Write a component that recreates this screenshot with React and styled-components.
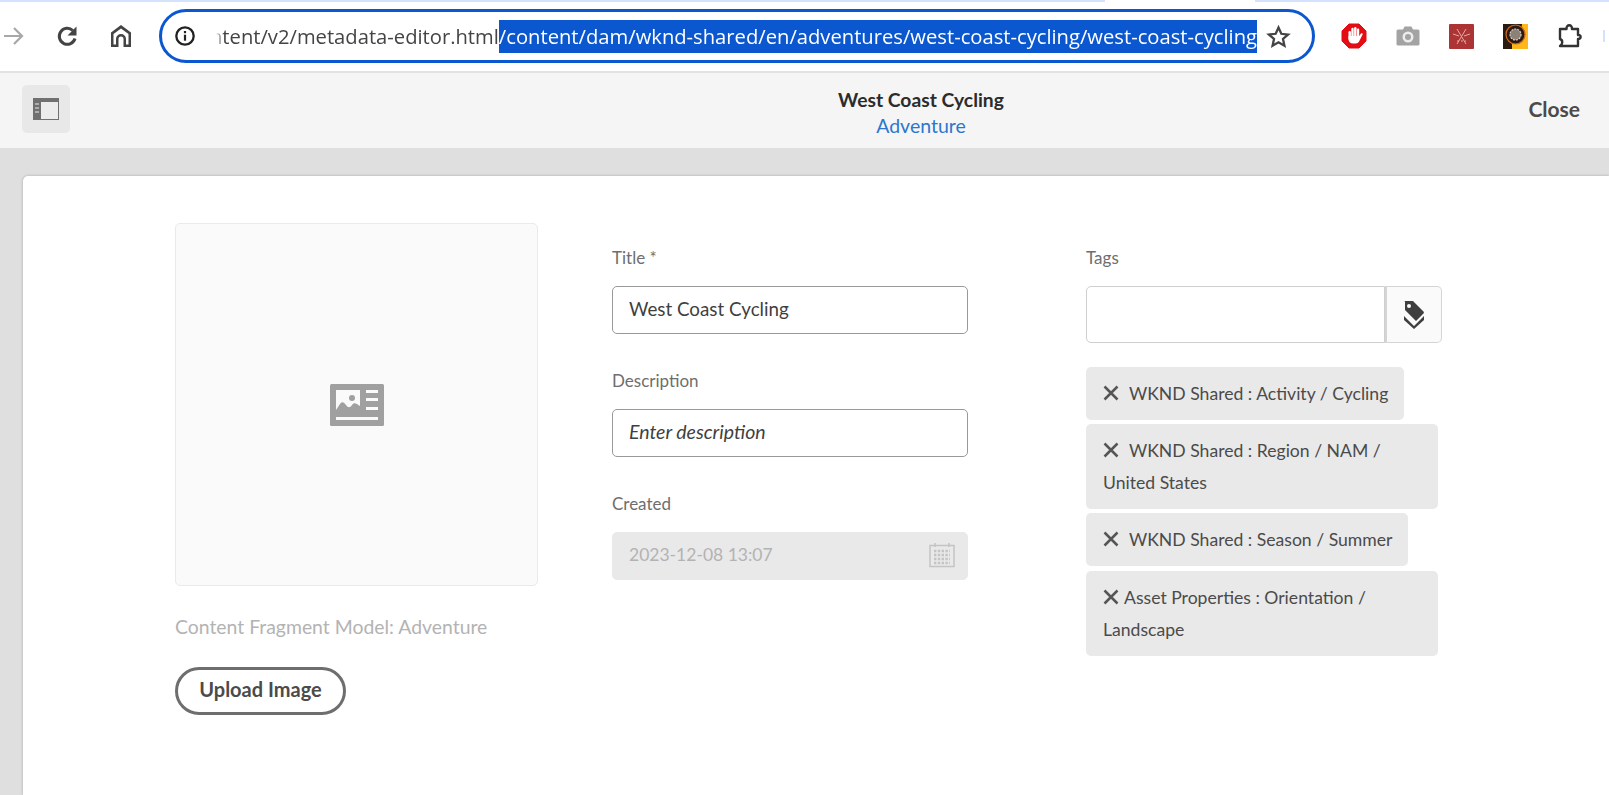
import React from 'react'
import styled, { createGlobalStyle } from 'styled-components'

const GlobalStyle = createGlobalStyle`
  html, body {
    margin: 0;
    padding: 0;
    height: 100%;
    overflow: hidden;
    background: #dfdfdf;
  }
  #root { height: 100%; }
  * { box-sizing: border-box; }
`

const Page = styled.div`
  width: 1609px;
  height: 795px;
  display: flex;
  flex-direction: column;
  overflow: hidden;
  font-family: Lato, "Open Sans", sans-serif;
`

const TabEdge = styled.div`
  height: 2px;
  background: #d3e3fd;
  padding-left: 1105px;
`

const ActiveTabEdge = styled.div`
  width: 150px;
  height: 2px;
  background: #fff;
`

const Toolbar = styled.div`
  height: 71px;
  flex: none;
  display: flex;
  align-items: center;
  background: #fff;
  border-bottom: 2px solid #e2e2e2;
  padding-bottom: 1px;
`

const NavIcon = styled.div`
  width: ${p => p.$w || 54}px;
  flex: none;
  display: flex;
  align-items: center;
  justify-content: ${p => (p.$start ? 'flex-start' : 'center')};
  padding-left: ${p => (p.$start ? '4px' : '0')};
`

const Omnibox = styled.div`
  width: 1156px;
  height: 54px;
  margin-left: 11px;
  flex: none;
  display: flex;
  align-items: center;
  border: 3px solid #0b57d0;
  border-radius: 27px;
  padding: 0 13px 0 12px;
  font-family: "Open Sans", sans-serif;
`

const UrlClip = styled.div`
  flex: 1;
  min-width: 0;
  margin-left: 20px;
  display: flex;
  justify-content: flex-end;
  overflow: hidden;
  white-space: nowrap;
  font-size: 20.2px;
  line-height: 33px;
  color: #444;
  -webkit-mask-image: linear-gradient(90deg, transparent 0, #000 8px);
  mask-image: linear-gradient(90deg, transparent 0, #000 8px);
`

const Selected = styled.span`
  background: #0b57d0;
  color: #fff;
`

const StarSlot = styled.div`
  width: 42px;
  flex: none;
  display: flex;
  justify-content: center;
`

const Extensions = styled.div`
  display: flex;
  align-items: center;
  gap: 29px;
  margin-left: 26px;
`

const WindowEdge = styled.div`
  width: 2px;
  height: 12px;
  margin-left: 20px;
  background: #d3e3fd;
`

const Header = styled.div`
  height: 75px;
  flex: none;
  display: grid;
  grid-template-columns: 799px 200px 1fr;
  align-items: center;
  background: #f5f5f5;
  padding: 0 29px 0 22px;
`

const RailButton = styled.div`
  width: 48px;
  height: 48px;
  margin-bottom: 3px;
  border-radius: 5px;
  background: #e8e8e8;
  display: flex;
  align-items: center;
  justify-content: center;
`

const HeaderTitle = styled.div`
  text-align: center;
  padding-top: 3px;
  font-size: 19.3px;
  line-height: 27px;
  font-weight: 700;
  color: #2c2c2c;
`

const HeaderSub = styled.div`
  font-size: 19.5px;
  line-height: 26px;
  font-weight: 400;
  color: #2d76cf;
`

const CloseLink = styled.div`
  justify-self: end;
  margin-bottom: 5px;
  font-size: 21px;
  font-weight: 700;
  color: #4b4b4b;
`

const Backdrop = styled.div`
  flex: 1;
  padding: 28px 0 0 23px;
  min-height: 0;
`

const Panel = styled.div`
  height: 100%;
  background: #fff;
  border-radius: 5px 0 0 0;
  box-shadow: 0 0 3px rgba(0, 0, 0, 0.25);
  padding: 47px 0 0 152px;
  display: grid;
  grid-template-columns: 363px 356px 356px;
  column-gap: 74px;
  align-items: start;
`

const ImageColumn = styled.div``

const FieldColumn = styled.div`
  padding-top: 23px;
`

const TagColumn = styled.div`
  margin-left: 44px;
  width: 356px;
  padding-top: 23px;
`

const ImageBox = styled.div`
  height: 363px;
  background: #fafafa;
  border: 1px solid #eaeaea;
  border-radius: 5px;
  display: flex;
  align-items: center;
  justify-content: center;
`

const ModelText = styled.div`
  margin-top: 29px;
  font-size: 19.4px;
  line-height: 24px;
  color: #b3b3b3;
`

const UploadButton = styled.button`
  display: block;
  margin-top: 28px;
  width: 171px;
  height: 48px;
  background: #fff;
  border: 3px solid #6e6e6e;
  border-radius: 24px;
  font: 700 20px Lato, sans-serif;
  color: #4b4b4b;
  padding: 0 0 5px;
`

const Field = styled.div`
  margin-bottom: 35px;
`

const Label = styled.div`
  font-size: 17px;
  line-height: 24px;
  margin-bottom: 16px;
  color: #6e6e6e;
`

const TextBox = styled.div`
  height: 48px;
  display: flex;
  align-items: center;
  justify-content: space-between;
  padding: 0 12px 3px 16px;
  border-radius: 5px;
  font-size: ${p => p.$size}px;
  border: 1px solid ${p => (p.$disabled ? '#e9e9e9' : '#999')};
  background: ${p => (p.$disabled ? '#e9e9e9' : '#fff')};
  color: ${p => (p.$disabled ? '#b3b3b3' : '#3f3f3f')};
  font-style: ${p => (p.$placeholder ? 'italic' : 'normal')};
`

const TagInputRow = styled.div`
  display: flex;
  height: 57px;
`

const TagInput = styled.div`
  width: 300px;
  background: #fff;
  border: 1px solid #cfcfcf;
  border-radius: 5px 0 0 5px;
`

const TagPicker = styled.div`
  width: 57px;
  background: #fafafa;
  border: 1px solid #d5d5d5;
  border-left-width: 2px;
  border-radius: 0 5px 5px 0;
  display: flex;
  align-items: center;
  justify-content: center;
`

const TagList = styled.div`
  margin-top: 24px;
  display: flex;
  flex-direction: column;
  align-items: flex-start;
  gap: 4.2px;
`

const Tag = styled.div`
  max-width: 352px;
  width: ${p => (p.$wide ? '352px' : 'auto')};
  background: #e9e9e9;
  border-radius: 5px;
  padding: 11px 16px 10px 17px;
  font-size: 17.6px;
  line-height: 32px;
  color: #4b4b4b;
`

const TagX = styled.svg`
  width: 16px;
  height: 16px;
  margin-right: ${p => p.$gap}px;
  vertical-align: -1px;
`

const HomeIcon = () => (
  <svg width="22" height="24" viewBox="0 0 22 24" fill="#444">
    <path fillRule="evenodd" d="M11 1l10 7.500V23h-7.500v-8a2.500 2.500 0 0 0-5 0v8H1V8.500zM11 4.500L3.500 10v10.500h2.500V15a5 5 0 0 1 10 0v5.500h2.500V10z" />
  </svg>
)

const ReloadIcon = () => (
  <svg width="24" height="24" viewBox="0 0 24 24" fill="none" stroke="#444" strokeWidth="3">
    <path d="M20 14.500A8 8 0 1 1 17.800 6.500" />
    <path d="M21.500 2.500v9h-9z" fill="#444" stroke="none" />
  </svg>
)

const ForwardIcon = () => (
  <svg width="20" height="20" viewBox="0 0 20 20" fill="none" stroke="#a8a8a8" strokeWidth="2.200">
    <path d="M0 10h18M10 2l8 8-8 8" />
  </svg>
)

const InfoIcon = () => (
  <svg width="22" height="22" viewBox="0 0 22 22" fill="none">
    <circle cx="11" cy="11" r="8.700" stroke="#222" strokeWidth="2.300" />
    <rect x="9.900" y="9.700" width="2.200" height="6" fill="#222" />
    <rect x="9.900" y="6" width="2.200" height="2.200" fill="#222" />
  </svg>
)

const StarIcon = () => (
  <svg width="25" height="25" viewBox="0 0 24 24" fill="none" stroke="#444" strokeWidth="2.200" strokeLinejoin="miter">
    <path d="M12 3.400l2.700 6 6.500.7-4.900 4.300 1.400 6.400L12 17.500l-5.700 3.300 1.400-6.400-4.900-4.300 6.500-.7z" />
  </svg>
)

const StopIcon = () => (
  <svg width="26" height="26" viewBox="0 0 26 26">
    <path d="M8 1h10l7 7v10l-7 7H8l-7-7V8z" fill="#e40d14" stroke="#e40d14" strokeLinejoin="round" />
    <g fill="#fff">
      <rect x="7.500" y="8" width="2.400" height="9" rx="1.200" />
      <rect x="10.300" y="4.800" width="2.400" height="10" rx="1.200" />
      <rect x="13.100" y="4" width="2.400" height="10" rx="1.200" />
      <rect x="15.900" y="5.500" width="2.300" height="10" rx="1.150" />
      <path d="M7.500 13h10.700l1.800-2.400c.8-1 2.200 0 1.600 1l-3 6c-.8 2-2 3-4 3h-2.600c-2.800 0-4.500-2-4.500-4.500z" />
    </g>
  </svg>
)

const CameraIcon = () => (
  <svg width="24" height="22" viewBox="0 0 24 22">
    <path d="M2 4.500h5L8.500 1.500h7L17 4.500h5a1.500 1.500 0 0 1 1.500 1.500v13a1.500 1.500 0 0 1-1.500 1.500H2A1.500 1.500 0 0 1 .5 19V6A1.500 1.500 0 0 1 2 4.500z" fill="#a3a3a3" />
    <circle cx="12" cy="12" r="5.500" fill="#ececec" />
    <circle cx="12" cy="12" r="3" fill="#a3a3a3" />
  </svg>
)

const RedExtIcon = () => (
  <svg width="25" height="25" viewBox="0 0 25 25">
    <rect width="25" height="25" rx="1" fill="#ad3434" />
    <g stroke="#e2aaa4" strokeWidth="1" fill="none">
      <path d="M8 5l9 15M17 5L8 20M4 10l6 2M21 10l-6 2" />
      <path d="M8 17h9" strokeDasharray="2 2" />
    </g>
  </svg>
)

const BadgeExtIcon = () => (
  <svg width="25" height="25" viewBox="0 0 25 25">
    <rect width="25" height="25" fill="#2a1a12" />
    <path d="M19 0h6v25H9v-6h8z" fill="#fdb71a" />
    <circle cx="12.500" cy="10.500" r="9.500" fill="#2a1a12" stroke="#c96a20" strokeWidth="1.200" />
    <circle cx="12.500" cy="10.500" r="5.500" fill="#8d8077" stroke="#d8cfc5" strokeWidth="1.200" strokeDasharray="2 1" />
  </svg>
)

const PuzzleIcon = () => (
  <svg width="26" height="26" viewBox="0 0 26 26" fill="none" stroke="#333" strokeWidth="2.400" strokeLinejoin="round">
    <path d="M3 6h6.500c-.5-5 6-5 5.500 0H21v6c3.500-.5 3.500 4 0 4v7H3c3-2 3-6 0-7z" />
  </svg>
)

const RailIcon = () => (
  <svg width="26" height="22" viewBox="0 0 26 22">
    <rect width="26" height="22" fill="#707070" />
    <rect x="8" y="4" width="17" height="17" fill="#ececec" />
    <path d="M2 6h4M2 10h4M2 14h4" stroke="#ececec" strokeWidth="1" />
  </svg>
)

const AssetIcon = () => (
  <svg width="54" height="42" viewBox="0 0 54 42">
    <rect width="54" height="42" rx="1.500" fill="#a0a0a0" />
    <rect x="6" y="6" width="24" height="22" fill="#fafafa" />
    <circle cx="22" cy="14" r="3" fill="#a0a0a0" />
    <path d="M6 26l4-6c2-3 4-2 6 1s4 3 6 0 4-2 8 1v6H6z" fill="#a0a0a0" />
    <path d="M36 6h12v3H36zM36 14h12v3H36zM36 23h12v3H36zM6 33h42v3H6z" fill="#fafafa" />
  </svg>
)

const CalendarIcon = () => (
  <svg width="26" height="26" viewBox="0 0 26 26" fill="none" stroke="#c4c4c4">
    <rect x="1" y="3.500" width="24" height="21" strokeWidth="1.500" />
    <path d="M6 1v4M20 1v4" strokeWidth="1.500" />
    <path d="M5 9h16M5 13h16M5 17h16M5 21h16" strokeWidth="2.400" strokeDasharray="2.400 1.400" />
  </svg>
)

const TagsIcon = () => (
  <svg width="22" height="28" viewBox="0 0 22 28">
    <path d="M1.500 1H10l10.500 10.500a1.500 1.500 0 0 1 0 2L13 21 2 10V2z" fill="#3f3f3f" transform="translate(0 -1)" />
    <circle cx="6" cy="5" r="2" fill="#fafafa" />
    <path d="M1 15l10 10 10-10v4L11 28 1 19z" fill="#3f3f3f" />
  </svg>
)

const RemoveGlyph = ({ gap }) => (
  <TagX $gap={gap} viewBox="0 0 16 16" fill="none" stroke="#555" strokeWidth="2.500">
    <path d="M1.500 1.500l13 13M14.500 1.500l-13 13" />
  </TagX>
)

const tags = [
  { text: 'WKND Shared : Activity / Cycling', gap: 10 },
  { text: 'WKND Shared : Region / NAM / United States', gap: 10, wide: true },
  { text: 'WKND Shared : Season / Summer', gap: 10 },
  { text: 'Asset Properties : Orientation / Landscape', gap: 5, wide: true },
]

const App = () => {
  return (
    <Page>
      <GlobalStyle />
      <TabEdge><ActiveTabEdge /></TabEdge>
      <Toolbar>
        <NavIcon $w={40} $start><ForwardIcon /></NavIcon>
        <NavIcon $w={54}><ReloadIcon /></NavIcon>
        <NavIcon $w={54}><HomeIcon /></NavIcon>
        <Omnibox>
          <InfoIcon />
          <UrlClip>
            <span>/libs/dam/cfm/admin/content/v2/metadata-editor.html</span>
            <Selected>/content/dam/wknd-shared/en/adventures/west-coast-cycling/west-coast-cycling</Selected>
          </UrlClip>
          <StarSlot><StarIcon /></StarSlot>
        </Omnibox>
        <Extensions>
          <StopIcon />
          <CameraIcon />
          <RedExtIcon />
          <BadgeExtIcon />
          <PuzzleIcon />
        </Extensions>
        <WindowEdge />
      </Toolbar>
      <Header>
        <div>
          <RailButton><RailIcon /></RailButton>
        </div>
        <HeaderTitle>
          West Coast Cycling
          <HeaderSub>Adventure</HeaderSub>
        </HeaderTitle>
        <CloseLink>Close</CloseLink>
      </Header>
      <Backdrop>
        <Panel>
          <ImageColumn>
            <ImageBox><AssetIcon /></ImageBox>
            <ModelText>Content Fragment Model: Adventure</ModelText>
            <UploadButton>Upload Image</UploadButton>
          </ImageColumn>
          <FieldColumn>
            <Field>
              <Label>Title *</Label>
              <TextBox $size={18.8}>West Coast Cycling</TextBox>
            </Field>
            <Field>
              <Label>Description</Label>
              <TextBox $size={19.5} $placeholder>Enter description</TextBox>
            </Field>
            <Field>
              <Label>Created</Label>
              <TextBox $size={17.5} $disabled>2023-12-08 13:07<CalendarIcon /></TextBox>
            </Field>
          </FieldColumn>
          <TagColumn>
            <Label>Tags</Label>
            <TagInputRow>
              <TagInput />
              <TagPicker><TagsIcon /></TagPicker>
            </TagInputRow>
            <TagList>
              {tags.map(tag => (
                <Tag key={tag.text} $wide={tag.wide}>
                  <RemoveGlyph gap={tag.gap} />
                  {tag.text}
                </Tag>
              ))}
            </TagList>
          </TagColumn>
        </Panel>
      </Backdrop>
    </Page>
  )
}

export default App
